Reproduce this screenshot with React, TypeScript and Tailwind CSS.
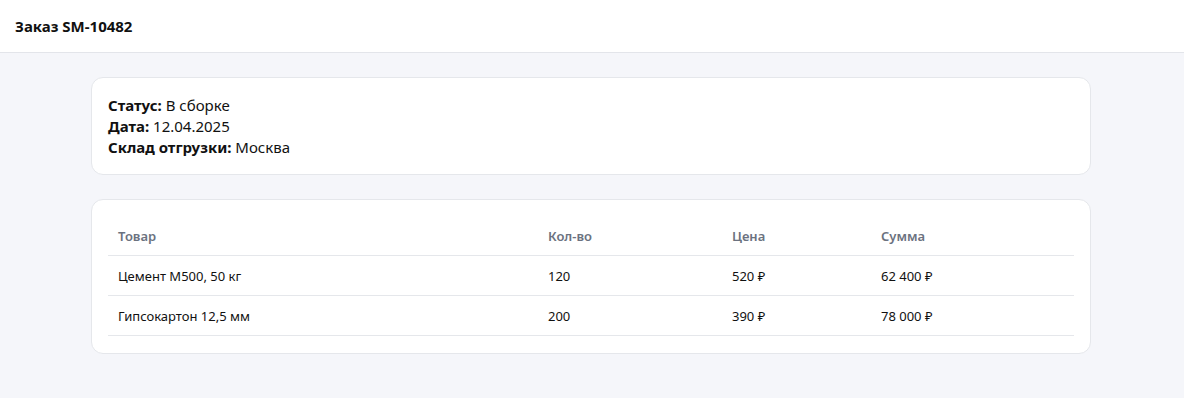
const rows = [
  { name: "Цемент М500, 50 кг", qty: "120", price: "520 ₽", sum: "62 400 ₽" },
  { name: "Гипсокартон 12,5 мм", qty: "200", price: "390 ₽", sum: "78 000 ₽" },
];

export default function App() {
  return (
    <div className="min-h-[398px] bg-[#f5f6fa] font-['Noto_Sans',sans-serif] text-[#111]">
      <header className="flex h-[53px] items-center border-b border-[#e3e5ea] bg-white px-[15px]">
        <h1 className="pt-px text-[15px] font-bold">Заказ SM-10482</h1>
      </header>
      <main className="mx-auto flex max-w-[1000px] -translate-x-px flex-col gap-6 py-6">
        <section className="rounded-xl border border-[#e5e7eb] bg-white px-4 pt-[17px] pb-4 text-[15px] leading-[21px]">
          <div><b>Статус:</b> В сборке</div>
          <div><b>Дата:</b> 12.04.2025</div>
          <div><b>Склад отгрузки:</b> Москва</div>
        </section>
        <section className="rounded-xl border border-[#e5e7eb] bg-white p-4 pb-[17px]">
          <table className="w-full border-collapse text-left text-[13px] leading-[19px]">
            <thead>
              <tr className="border-b border-[#e5e7eb]">
                <th className="h-[39px] w-[430px] px-[10px] pt-[3px] pb-0 font-semibold text-[#6b7280]">Товар</th>
                <th className="w-[184px] px-[10px] pt-[3px] pb-0 font-semibold text-[#6b7280]">Кол-во</th>
                <th className="w-[149px] px-[10px] pt-[3px] pb-0 font-semibold text-[#6b7280]">Цена</th>
                <th className="px-[10px] pt-[3px] pb-0 font-semibold text-[#6b7280]">Сумма</th>
              </tr>
            </thead>
            <tbody>
              {rows.map((r) => (
                <tr key={r.name} className="border-b border-[#e5e7eb]">
                  <td className="h-[40px] px-[10px] pt-[2px]">{r.name}</td>
                  <td className="px-[10px] pt-[2px]">{r.qty}</td>
                  <td className="px-[10px] pt-[2px]">{r.price}</td>
                  <td className="px-[10px] pt-[2px]">{r.sum}</td>
                </tr>
              ))}
            </tbody>
          </table>
        </section>
      </main>
    </div>
  );
}
